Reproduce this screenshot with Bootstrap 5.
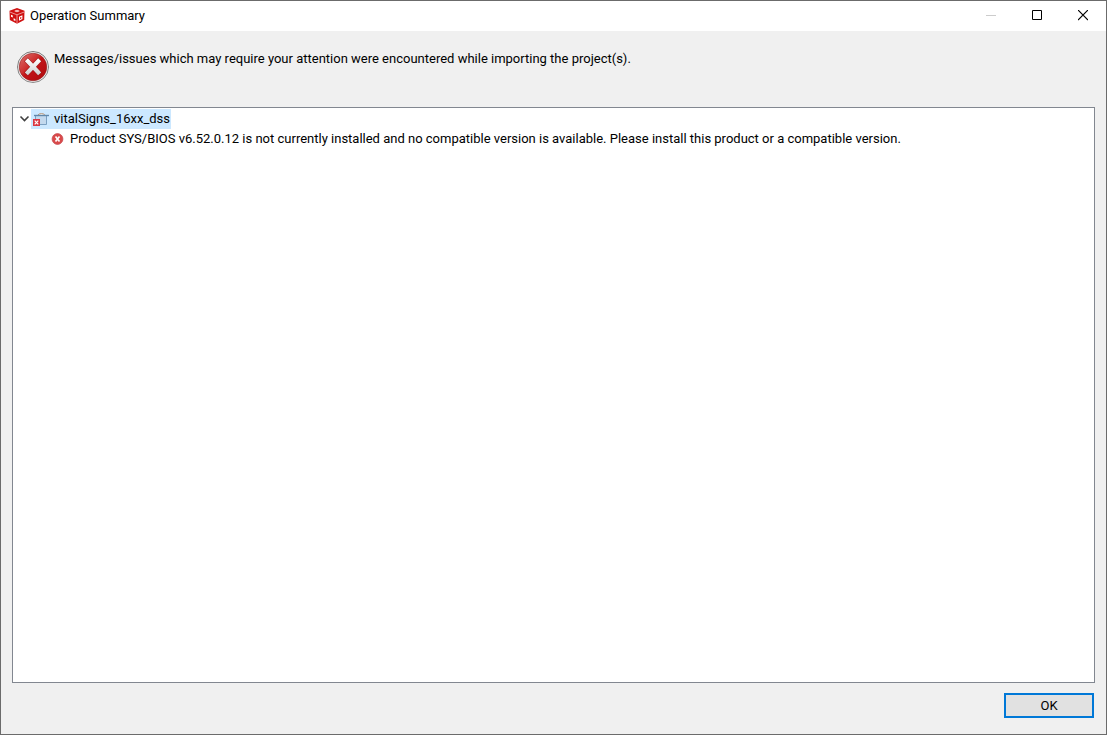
<!DOCTYPE html>
<html lang="en">
<head>
<meta charset="utf-8">
<meta name="viewport" content="width=device-width, initial-scale=1">
<title>Operation Summary</title>
<link href="https://cdn.jsdelivr.net/npm/bootstrap@5.3.0/dist/css/bootstrap.min.css" rel="stylesheet">
<style>
body{font-family:Roboto,"Noto Sans",sans-serif;font-size:13px;line-height:20px;color:#000;background:#f0f0f0}
.dialog{border:1px solid #6b6b6b}
.titlebar{height:30px;background:#fff;padding-left:8px}
.title-text{font-size:13px;line-height:20px;padding-left:5px}
.caption-btn{width:46px;height:30px;border:0;background:none;padding:0}
.caption-btn:disabled{opacity:1}
.message{padding:18px 16px 24px}
.message p{padding-left:5px}
.tree{margin:0 11px;border:1px solid #828790;background:#fff;padding:1px 6px}
.node{height:20px}
.tree-label{background:#cce8ff;padding:0 1px 0 2px;gap:5px}
.leaf{padding-left:32px;gap:6px}
.toggle-btn{border:0;background:none;padding:0;width:12px}
.actions{padding:10px 12px 16px}
.ok-btn{width:90px;height:25px;border:2px solid #0078d7;background:#e1e1e1;padding:0;line-height:20px}
svg{display:block;flex:none}
</style>
</head>
<body>
<main class="dialog d-flex flex-column min-vh-100">
  <header class="titlebar d-flex align-items-center">
    <svg width="16" height="16" viewBox="0 0 16 16" aria-hidden="true"><path fill="#cf1010" d="M8 0l7.500 2.800L15.200 12 8 15.800.8 12 .5 2.800z"/><path d="M.8 4L8 6.800 15.200 4M8 6.800V16" fill="none" stroke="#f3b5b5" stroke-width=".8"/><path fill="#fff" d="M5.200 2.900L8 1.800l2.800 1.100L8 4.200zM2 6.800l1.800.8v2l-1.800-.8zM4.600 10.200l1.800.8v2l-1.800-.8zM10 8.800l3.400-1.500v3.700L10 12.700z"/><path fill="#cf1010" d="M7 2.900l1-.5 1 .5-1 .5zM11 9.600l1.300-.6v1.500l-1.300.6z"/></svg>
    <h1 class="title-text m-0 fw-normal">Operation Summary</h1>
    <div class="ms-auto d-flex">
      <button class="caption-btn d-flex align-items-center justify-content-center" disabled aria-label="Minimize"><svg width="10" height="12"><path d="M0 5.500h10" stroke="#ccc"/></svg></button>
      <button class="caption-btn d-flex align-items-center justify-content-center" aria-label="Maximize"><svg width="12" height="12"><path d="M1.500.5h9v9h-9z" fill="none" stroke="#000"/></svg></button>
      <button class="caption-btn d-flex align-items-center justify-content-center" aria-label="Close"><svg width="10" height="12"><path d="M0 0l10 10M10 0L0 10" stroke="#000" stroke-width="1.200"/></svg></button>
    </div>
  </header>
  <section class="message d-flex align-items-start">
    <svg width="32" height="34" viewBox="0 0 32 34" aria-hidden="true"><defs><linearGradient id="rim" x2="0" y2="1"><stop stop-color="#777"/><stop offset="1" stop-color="#888"/></linearGradient><linearGradient id="red" x2="1" y2="1"><stop stop-color="#dc7573"/><stop offset=".4" stop-color="#ce302f"/><stop offset=".5" stop-color="#c21418"/><stop offset="1" stop-color="#ae090c"/></linearGradient><linearGradient id="cross" gradientUnits="userSpaceOnUse" x1="0" y1="10" x2="0" y2="26"><stop stop-color="#fff"/><stop offset="1" stop-color="#d0d0d0"/></linearGradient></defs><circle cx="16" cy="18" r="15.500" fill="#f4f4f4" stroke="url(#rim)"/><circle cx="16" cy="18" r="13.800" fill="url(#red)" stroke="#8d2020" stroke-width=".6"/><path d="M10.800 12.300l10.400 11M21.200 12.300l-10.400 11" stroke="#9b1517" stroke-width="5.200" stroke-linecap="square"/><path d="M10.800 12.300l10.400 11M21.200 12.300l-10.400 11" stroke="url(#cross)" stroke-width="4.200" stroke-linecap="square"/></svg>
    <p class="mb-0">Messages/issues which may require your attention were encountered while importing the project(s).</p>
  </section>
  <section class="tree flex-grow-1" aria-label="Issues">
    <div class="node d-flex align-items-center">
      <button class="toggle-btn" aria-label="Collapse"><svg width="12" height="12" viewBox="0 0 12 12"><path d="M1.500 3.500l4 4 4-4" fill="none" stroke="#404040" stroke-width="1.600"/></svg></button>
      <span class="tree-label d-flex align-items-center"><svg width="16" height="20" viewBox="0 0 16 20" aria-hidden="true"><path d="M4.500 6.500Q5.500 4.500 8.500 4.500T12 6.500" fill="#eee" stroke="#b89b82"/><path d="M2.500 7v8.500h11V7" fill="#c3d9ee" stroke="#7ba0c2"/><path d="M1 6.500h15" stroke="#6088ac" stroke-width="1.400"/><path d="M0 10h7v7H0z" fill="#d93842"/><path d="M1.700 11.700l3.600 3.600m0-3.600l-3.600 3.600" stroke="#fff" stroke-width="1.200"/></svg><span>vitalSigns_16xx_dss</span></span>
    </div>
    <div class="node leaf d-flex align-items-center">
      <svg width="13" height="13" viewBox="0 0 13 13" aria-hidden="true"><circle cx="6.500" cy="6" r="5.400" fill="#d94a4a" stroke="#c94a50" stroke-width=".8"/><path d="M4.500 3.500l4 5m0-5l-4 5" stroke="#fff" stroke-width="1.700"/></svg>
      <span>Product SYS/BIOS v6.52.0.12 is not currently installed and no compatible version is available. Please install this product or a compatible version.</span>
    </div>
  </section>
  <footer class="actions d-flex justify-content-end"><button class="ok-btn">OK</button></footer>
</main>
<script src="https://cdn.jsdelivr.net/npm/bootstrap@5.3.0/dist/js/bootstrap.bundle.min.js"></script>
</body>
</html>
